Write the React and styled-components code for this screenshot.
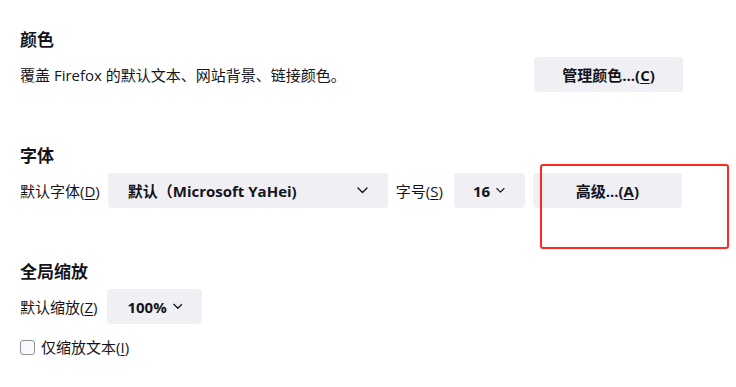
import React from "react";
import styled, { createGlobalStyle } from "styled-components";

const Global = createGlobalStyle`
  html, body { margin: 0; padding: 0; background: #fff; }
  body {
    font-family: "Open Sans", "Noto Sans CJK SC", sans-serif;
    color: #15141a;
    font-size: 15px;
  }
`;

const Page = styled.div`
  position: relative;
  width: 736px;
  height: 387px;
  box-sizing: border-box;
  padding: 29px 53px 0 20px;
  overflow: hidden;
`;

const Section = styled.section`
  display: flex;
  flex-direction: column;
  margin-top: ${(p) => (p.$first ? 0 : "53px")};
`;

const Heading = styled.h2`
  margin: 0 0 6px;
  font-size: 17px;
  line-height: 22px;
  font-weight: 700;
`;

const Row = styled.div`
  display: flex;
  align-items: center;
  justify-content: ${(p) => (p.$spread ? "space-between" : "flex-start")};
  gap: 8px;
  height: 35px;
`;

const Text = styled.span`
  font-size: 15px;
  line-height: 20px;
  white-space: nowrap;
  margin-right: ${(p) => p.$extra || 0}px;
`;

const Button = styled.button`
  font-family: inherit;
  width: ${(p) => p.$w}px;
  height: 35px;
  border: none;
  border-radius: 4px;
  background: #f0f0f4;
  color: #15141a;
  font-size: 15px;
  font-weight: 700;
  padding: 0;
  white-space: nowrap;
`;

const Select = styled.div`
  box-sizing: border-box;
  width: ${(p) => p.$w}px;
  height: 35px;
  border-radius: 4px;
  background: #f0f0f4;
  display: flex;
  align-items: center;
  justify-content: ${(p) => (p.$spread ? "space-between" : "flex-start")};
  gap: 6px;
  padding: 0 20px 0 ${(p) => p.$pl || 20}px;
  font-size: 15px;
  font-weight: 700;
  white-space: nowrap;
`;

const Key = styled.u`
  text-underline-offset: 2px;
`;

const CheckRow = styled.label`
  display: flex;
  align-items: center;
  gap: 6px;
  margin-top: 12px;
  height: 22px;
`;

const Box = styled.span`
  box-sizing: border-box;
  width: 15px;
  height: 15px;
  border: 1px solid #8f8f9d;
  border-radius: 3px;
  background: #f9f9fb;
`;

const Highlight = styled.div`
  position: absolute;
  left: 540px;
  top: 164px;
  width: 189px;
  height: 85px;
  box-sizing: border-box;
  border: 2px solid #ff2a1f;
  border-radius: 3px;
  pointer-events: none;
`;

const Chevron = () => (
  <svg width="11" height="7" viewBox="0 0 11 7" fill="none">
    <path d="M1 1l4.5 4.5L10 1" stroke="#15141a" strokeWidth="1.4" strokeLinecap="round" strokeLinejoin="round" />
  </svg>
);

export default function App() {
  return (
    <>
      <Global />
      <Page>
        <Section $first>
          <Heading>颜色</Heading>
          <Row $spread>
            <Text>覆盖 Firefox 的默认文本、网站背景、链接颜色。</Text>
            <Button $w={149}>
              管理颜色...(<Key>C</Key>)
            </Button>
          </Row>
        </Section>

        <Section>
          <Heading>字体</Heading>
          <Row>
            <Text>
              默认字体(<Key>D</Key>)
            </Text>
            <Select $w={280} $spread>
              <span>默认（Microsoft YaHei)</span>
              <Chevron />
            </Select>
            <Text $extra={3}>
              字号(<Key>S</Key>)
            </Text>
            <Select $w={71} $pl={19}>
              <span>16</span>
              <Chevron />
            </Select>
            <Button $w={149}>
              高级...(<Key>A</Key>)
            </Button>
          </Row>
        </Section>

        <Section>
          <Heading>全局缩放</Heading>
          <Row>
            <Text $extra={2}>
              默认缩放(<Key>Z</Key>)
            </Text>
            <Select $w={95}>
              <span>100%</span>
              <Chevron />
            </Select>
          </Row>
          <CheckRow>
            <Box />
            <Text>
              仅缩放文本(<Key>I</Key>)
            </Text>
          </CheckRow>
        </Section>

        <Highlight />
      </Page>
    </>
  );
}
